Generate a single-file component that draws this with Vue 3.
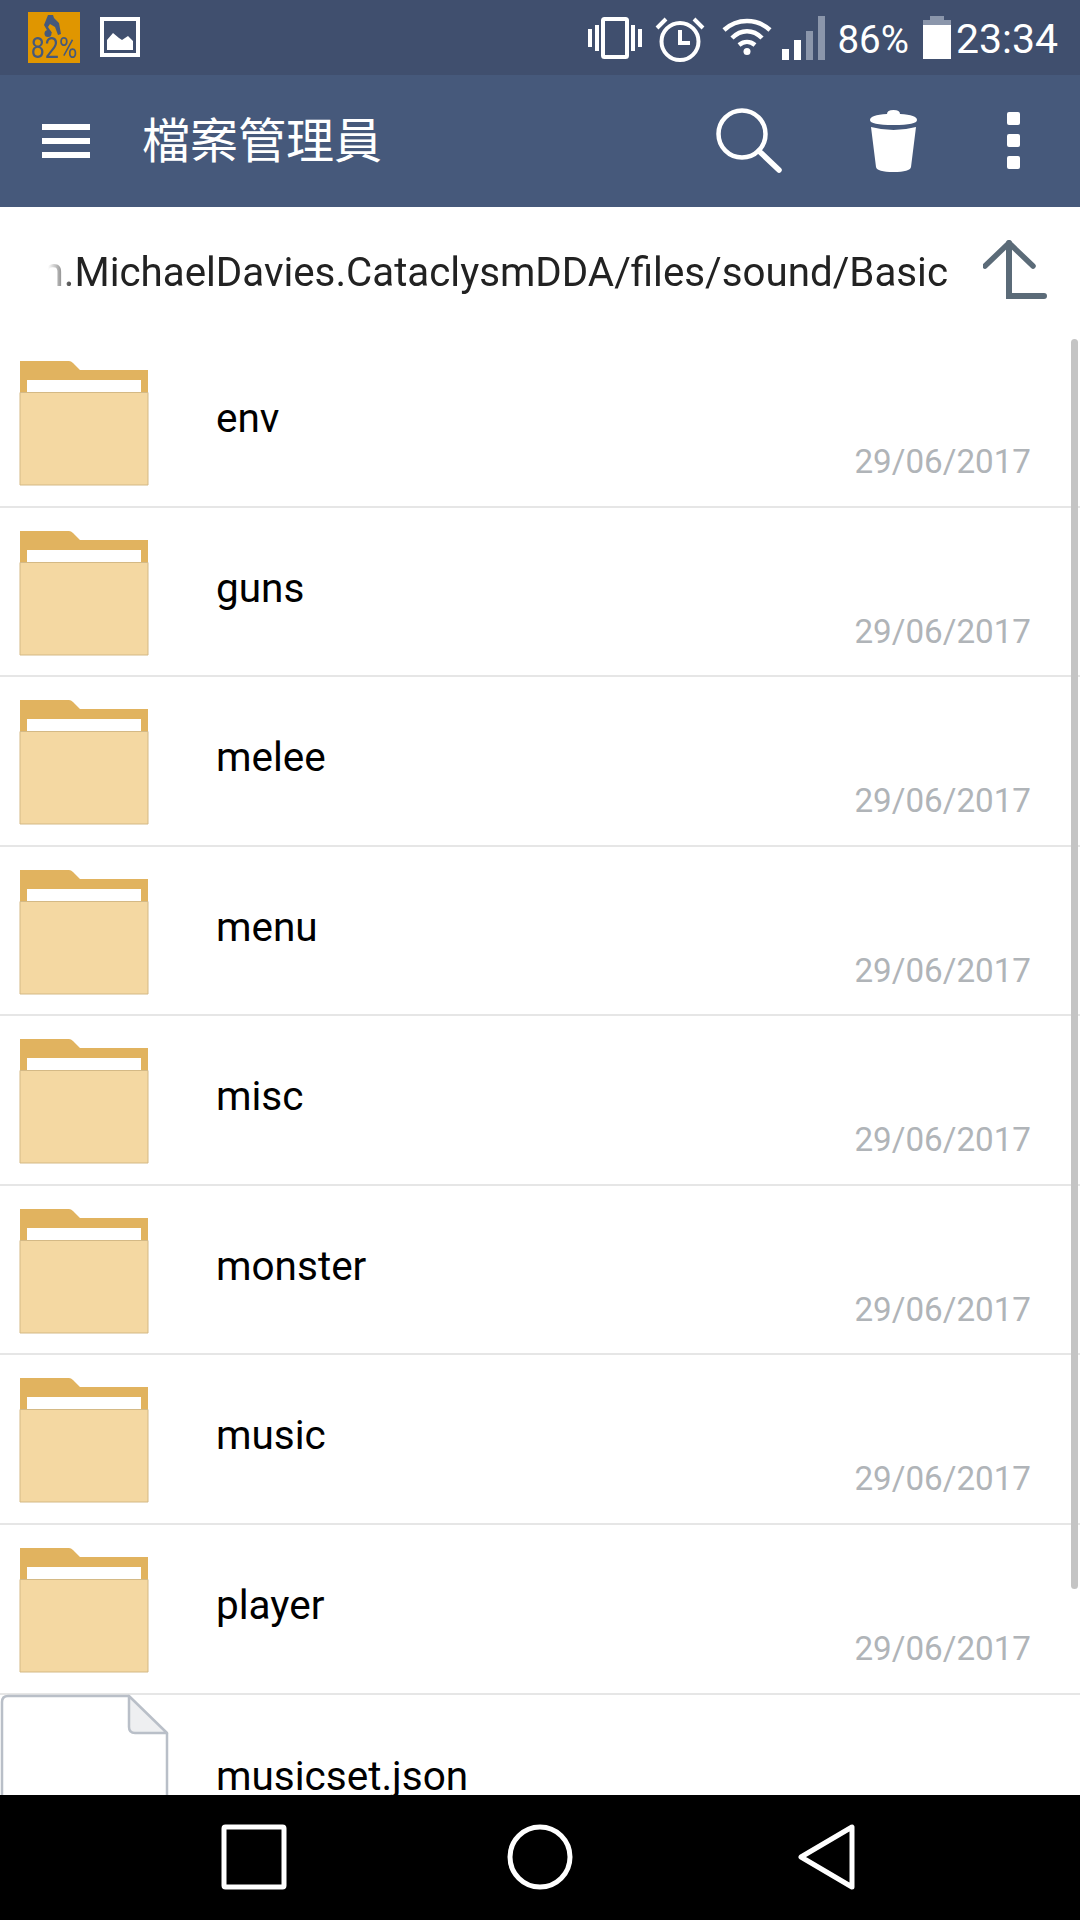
<script setup>
const folders = ['env', 'guns', 'melee', 'menu', 'misc', 'monster', 'music', 'player'];
const date = '29/06/2017';
</script>

<template>
  <div class="screen">
    <div class="status-bar">
      <div class="status-left">
        <div class="cpu-badge">
          <svg class="cpu-figure" viewBox="0 0 52 24">
            <path d="M20 2l5 0 1 3 5 5 2 11-3 1-3-8-5-3-2 3 4 6-4-1-4-7z" fill="#46597b" />
            <circle cx="20" cy="20.500" r="3.500" fill="#46597b" />
          </svg>
          <span class="cpu-text">82%</span>
        </div>
        <svg class="status-icon" width="40" height="40" viewBox="0 0 40 40">
          <rect x="2" y="2" width="36" height="36" fill="none" stroke="#fff" stroke-width="4" />
          <path d="M7 33V23l6-7 6 5 3 2 6-4 5 5v9z" fill="#fff" />
        </svg>
      </div>
      <div class="status-right">
        <svg class="vibrate" width="56" height="42" viewBox="0 0 56 42">
          <rect x="16" y="2" width="24" height="38" rx="1.500" fill="none" stroke="#fff" stroke-width="4" />
          <path d="M1 12h4v18H1zM8 8h4v26H8zM44 8h4v26h-4zM51 12h4v18h-4z" fill="#fff" />
        </svg>
        <svg class="alarm" width="50" height="46" viewBox="0 0 50 46">
          <circle cx="25" cy="25.500" r="18.500" fill="none" stroke="#fff" stroke-width="4" />
          <path d="M25 14v13h10" fill="none" stroke="#fff" stroke-width="4" />
          <path d="M2 12 11 3M48 12 39 3" fill="none" stroke="#fff" stroke-width="4" />
        </svg>
        <svg class="wifi" width="50" height="37" viewBox="0 0 50 37">
          <path d="M2 12C15 0 35 0 48 12M10 20C19 11 31 11 40 20M17 27C22 23 28 23 33 27" fill="none" stroke="#fff" stroke-width="4.500" />
          <circle cx="25" cy="33.500" r="3.500" fill="#fff" />
        </svg>
        <svg class="signal" width="44" height="44" viewBox="0 0 44 44">
          <rect x="0" y="33" width="7" height="11" fill="#fff" />
          <rect x="12" y="24" width="7" height="20" fill="#fff" />
          <rect x="24" y="15" width="7" height="29" fill="#8b96ab" />
          <rect x="36" y="0" width="7" height="44" fill="#8b96ab" />
        </svg>
        <span class="battery-text">86%</span>
        <div class="battery">
          <div class="battery-cap"></div>
          <div class="battery-empty"></div>
          <div class="battery-fill"></div>
        </div>
        <span class="clock">23:34</span>
      </div>
    </div>

    <header class="toolbar">
      <div class="menu-icon"><span></span><span></span><span></span></div>
      <h1 class="title">檔案管理員</h1>
      <svg class="search" width="66" height="66" viewBox="0 0 66 66">
        <circle cx="26" cy="26" r="23.500" fill="none" stroke="#fff" stroke-width="4.500" />
        <path d="M43 43 63 62" stroke="#fff" stroke-width="5.500" stroke-linecap="round" />
      </svg>
      <svg class="trash" width="47" height="64" viewBox="0 0 47 64">
        <path d="M17 5Q17 1 23.500 1T30 5Q47 6 47 11 47 16 23.500 16T0 11Q0 6 17 5z" fill="#fff" />
        <path d="M1 18Q23.500 24 46 18L41 58Q40 63 23.500 63T6 58z" fill="#fff" />
      </svg>
      <div class="more"><span></span><span></span><span></span></div>
    </header>

    <div class="path-bar">
      <div class="path-scroll">
        <span class="path-text">com.MichaelDavies.CataclysmDDA/files/sound/Basic</span>
      </div>
      <svg class="up" width="64" height="60" viewBox="0 0 64 60">
        <path d="M2 26 26 3 50 26" fill="none" stroke="#5b6b78" stroke-width="5.500" stroke-linecap="round" />
        <path d="M26 3V56H61" fill="none" stroke="#5b6b78" stroke-width="6" stroke-linecap="round" />
      </svg>
    </div>

    <main class="list">
      <div class="scrollbar"></div>
      <div v-for="name in folders" :key="name" class="row">
        <div class="thumb">
          <svg width="130" height="126" viewBox="0 0 130 126">
            <path d="M1 1H50Q52 1 54 3L61 10H129V65H1z" fill="#e1b35f" />
            <rect x="8" y="20" width="114" height="12" fill="#fff" />
            <path d="M1 32.500H129V125H1z" fill="#f4d8a2" stroke="#d4b985" stroke-width="1" />
          </svg>
        </div>
        <span class="name">{{ name }}</span>
        <span class="date">{{ date }}</span>
      </div>
      <div class="row file-row">
        <svg class="file" width="170" height="120" viewBox="0 0 170 120">
          <path d="M129 3H8Q2 3 2 9V120M167 40V120" fill="none" stroke="#b9bfc8" stroke-width="2.500" />
          <path d="M129 3 167 40H135Q129 40 129 34z" fill="#eeeff1" stroke="#b9bfc8" stroke-width="2.500" stroke-linejoin="round" />
        </svg>
        <span class="name file-name">musicset.json</span>
      </div>
    </main>

    <nav class="nav-bar">
      <svg width="66" height="66" viewBox="0 0 66 66">
        <rect x="3" y="3" width="60" height="60" rx="1.500" fill="none" stroke="#fff" stroke-width="5" />
      </svg>
      <svg width="66" height="66" viewBox="0 0 66 66">
        <circle cx="33" cy="33" r="30" fill="none" stroke="#fff" stroke-width="5" />
      </svg>
      <svg class="nav-back" width="60" height="66" viewBox="0 0 60 66">
        <path d="M5 33 56 3V63z" fill="none" stroke="#fff" stroke-width="5" stroke-linejoin="round" />
      </svg>
    </nav>
  </div>
</template>

<style>
html, body { margin: 0; background: #fff; }
</style>

<style scoped>
.screen {
  width: 1080px;
  height: 1920px;
  display: flex;
  flex-direction: column;
  overflow: hidden;
  background: #fff;
  font-family: Roboto, "Noto Sans CJK TC", sans-serif;
}

.status-bar {
  height: 75px;
  flex: none;
  display: flex;
  justify-content: space-between;
  background: #404f6e;
  color: #fff;
}
.status-left { display: flex; gap: 20px; padding: 12px 0 0 28px; align-items: flex-start; }
.status-left .status-icon { margin-top: 5px; }
.cpu-badge {
  width: 52px;
  height: 51px;
  background: #e09600;
  text-align: center;
  overflow: hidden;
}
.cpu-figure { display: block; width: 52px; height: 24px; margin-top: 1px; }
.cpu-text {
  display: block;
  font-size: 25px;
  line-height: 24px;
  color: #46597b;
  transform: scaleY(1.15);
}

.status-right { display: flex; align-items: flex-start; padding-right: 22px; }
.vibrate { margin: 17px 0 0 0; }
.alarm { margin: 16px 0 0 12px; }
.wifi { margin: 18px 0 0 17px; }
.signal { margin: 16px 0 0 10px; }
.battery-text { font-size: 38.500px; line-height: 43px; margin: 18px 0 0 11px; }
.battery { width: 28px; height: 43px; margin: 16px 0 0 14px; display: flex; flex-direction: column; align-items: center; }
.battery-cap { width: 14px; height: 4px; background: #8b96ab; }
.battery-empty { width: 28px; height: 5px; background: #8b96ab; }
.battery-fill { width: 28px; flex: 1; background: #fff; }
.clock { font-size: 41px; line-height: 46px; margin: 16px 0 0 5px; }

.toolbar {
  height: 132px;
  flex: none;
  display: flex;
  align-items: center;
  background: #46597b;
  color: #fff;
}
.menu-icon { width: 48px; margin-left: 42px; display: flex; flex-direction: column; gap: 8px; }
.menu-icon span { display: block; height: 6px; background: #fff; }
.title { margin: 2px 0 0 52px; font-size: 48px; font-weight: 400; line-height: 60px; flex: 1; }
.trash { margin-left: 88px; }
.more { margin: 0 60px 2px 90px; display: flex; flex-direction: column; gap: 9px; }
.more span { display: block; width: 13px; height: 13px; border-radius: 2px; background: #fff; }

.path-bar {
  height: 131px;
  flex: none;
  display: flex;
  align-items: center;
}
.path-scroll {
  width: 900px;
  margin-left: 48px;
  display: flex;
  justify-content: flex-end;
  overflow: hidden;
  -webkit-mask-image: linear-gradient(to right, transparent 0, #000 28px);
  mask-image: linear-gradient(to right, transparent 0, #000 28px);
}
.path-text { font-size: 40.300px; line-height: 54px; color: #222; white-space: nowrap; }
.up { margin: 0 0 6px 35px; }

.list { flex: 1; position: relative; overflow: hidden; }
.scrollbar {
  position: absolute;
  top: 1px;
  right: 2px;
  width: 7px;
  height: 1250px;
  border-radius: 4px;
  background: #c4c4c4;
  z-index: 1;
}
.row {
  height: 169.570px;
  box-sizing: border-box;
  display: flex;
  position: relative;
  border-bottom: 2px solid #e6e6e6;
}
.row:last-child { border-bottom: 0; }
.thumb { margin: 22px 0 0 19px; width: 130px; flex: none; }
.thumb svg { display: block; }
.name {
  position: absolute;
  left: 216px;
  top: 55px;
  font-size: 40.500px;
  line-height: 50px;
  color: #000;
}
.date {
  position: absolute;
  right: 49px;
  top: 102px;
  font-size: 33.200px;
  line-height: 44px;
  color: #b0b4b8;
}
.file { display: block; flex: none; margin-top: -2px; }
.file-name { top: 56px; }

.nav-bar {
  height: 125px;
  flex: none;
  background: #000;
  position: relative;
  z-index: 2;
  display: flex;
  align-items: flex-start;
  padding: 29px 0 0 221px;
  gap: 220px;
  box-sizing: border-box;
}
.nav-back { margin-left: 3px; }
</style>
